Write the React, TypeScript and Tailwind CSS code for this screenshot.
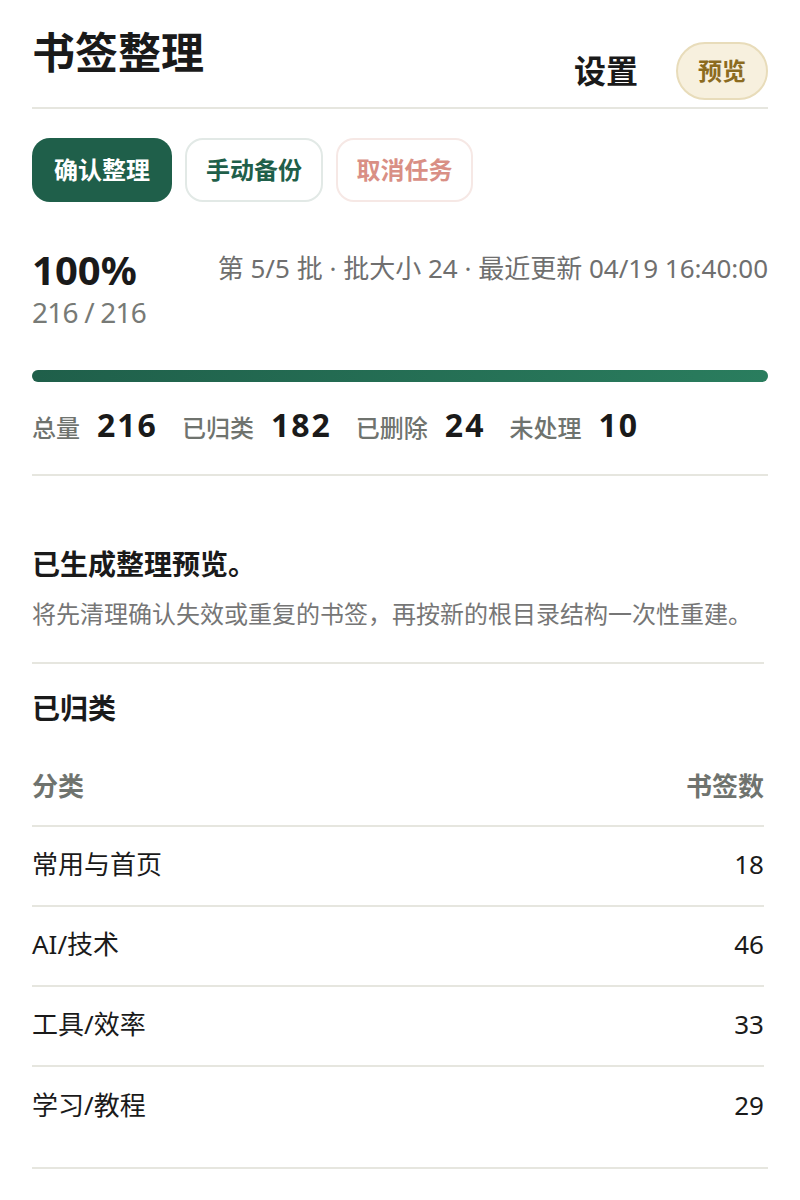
const rows = [
  { name: "常用与首页", count: 18 },
  { name: "AI/技术", count: 46 },
  { name: "工具/效率", count: 33 },
  { name: "学习/教程", count: 29 },
];

const stats = [
  { label: "总量", value: 216 },
  { label: "已归类", value: 182 },
  { label: "已删除", value: 24 },
  { label: "未处理", value: 10 },
];

export default function App() {
  return (
    <div
      className="min-h-[1200px] bg-white px-8 text-[#1a1a1a]"
      style={{ fontFamily: '"Noto Sans", "Noto Sans CJK SC", sans-serif' }}
    >
      <header className="flex items-start justify-between border-b-2 border-[#e6e6df] pt-[26px] pb-[7px]">
        <h1 className="text-[43px] font-bold leading-[53px]">书签整理</h1>
        <div className="mt-[16px] flex items-center gap-[38px]">
          <span className="text-[32px] font-bold leading-[40px]">设置</span>
          <button className="h-[58px] rounded-full border-2 border-[#e8dcba] bg-[#f7f0de] px-[20px] text-[24px] font-bold text-[#8c6b1f]">
            预览
          </button>
        </div>
      </header>

      <div className="mt-[29px] flex gap-[13px]">
        <button className="h-[64px] w-[140px] rounded-[18px] bg-[#1f5f4a] text-[24px] font-bold text-white">
          确认整理
        </button>
        <button className="h-[64px] w-[138px] rounded-[18px] border-2 border-[#e2e9e6] bg-white text-[24px] font-bold text-[#1f5f4a]">
          手动备份
        </button>
        <button className="h-[64px] w-[137px] rounded-[18px] border-2 border-[#f6e8e5] bg-white text-[24px] font-bold text-[#d98f85]">
          取消任务
        </button>
      </div>

      <section className="border-b-2 border-[#e6e6df] pb-[26px]">
        <div className="mt-[44px] flex items-start justify-between">
          <div className="flex flex-col">
            <span className="text-[40px] font-bold leading-[48px]">100%</span>
            <span className="text-[28px] leading-[36px] tracking-[-0.8px] text-[#777a76]">216 / 216</span>
          </div>
          <span className="mt-[4px] text-[26px] leading-[36px] text-[#6f6f6f]">
            第 5/5 批 · 批大小 24 · 最近更新 04/19 16:40:00
          </span>
        </div>

        <div className="mt-[40px] h-[12px] w-full rounded-full bg-[#e6e6df]">
          <div
            className="h-full rounded-full bg-gradient-to-r from-[#1f5f4a] to-[#2a7d5e]"
            style={{ width: "100%" }}
          />
        </div>

        <div className="mt-[23px] flex items-baseline">
          {stats.map((s) => (
            <div key={s.label} className="mr-[24px] flex items-baseline">
              <span className="mr-[17px] text-[24px] font-medium leading-[40px] text-[#6f736e]">
                {s.label}
              </span>
              <span className="text-[32px] font-bold leading-[40px] tracking-[2px]">{s.value}</span>
            </div>
          ))}
        </div>
      </section>

      <div className="pr-[4px]">
        <div className="border-b-2 border-[#e6e6df] pb-[30px]">
          <h2 className="mt-[68px] text-[28px] font-bold leading-[40px]">已生成整理预览。</h2>
          <p className="mt-[12px] text-[24px] leading-[36px] text-[#767676]">
            将先清理确认失效或重复的书签，再按新的根目录结构一次性重建。
          </p>
        </div>

        <h3 className="mt-[24px] text-[28px] font-bold leading-[40px]">已归类</h3>

        <div className="mt-[19px]">
          <div className="flex h-[80px] items-center justify-between border-b-2 border-[#e6e6df] text-[26px] font-bold text-[#6f736e]">
            <span>分类</span>
            <span>书签数</span>
          </div>
          {rows.map((r, i) => (
            <div
              key={r.name}
              className={`flex h-[80px] items-center justify-between pb-[4px] text-[26px] ${
                i < rows.length - 1 ? "border-b-2 border-[#e6e6df]" : ""
              }`}
            >
              <span>{r.name}</span>
              <span>{r.count}</span>
            </div>
          ))}
        </div>
      </div>

      <div className="mt-[20px] h-[2px] bg-[#e6e6df]" />
    </div>
  );
}
